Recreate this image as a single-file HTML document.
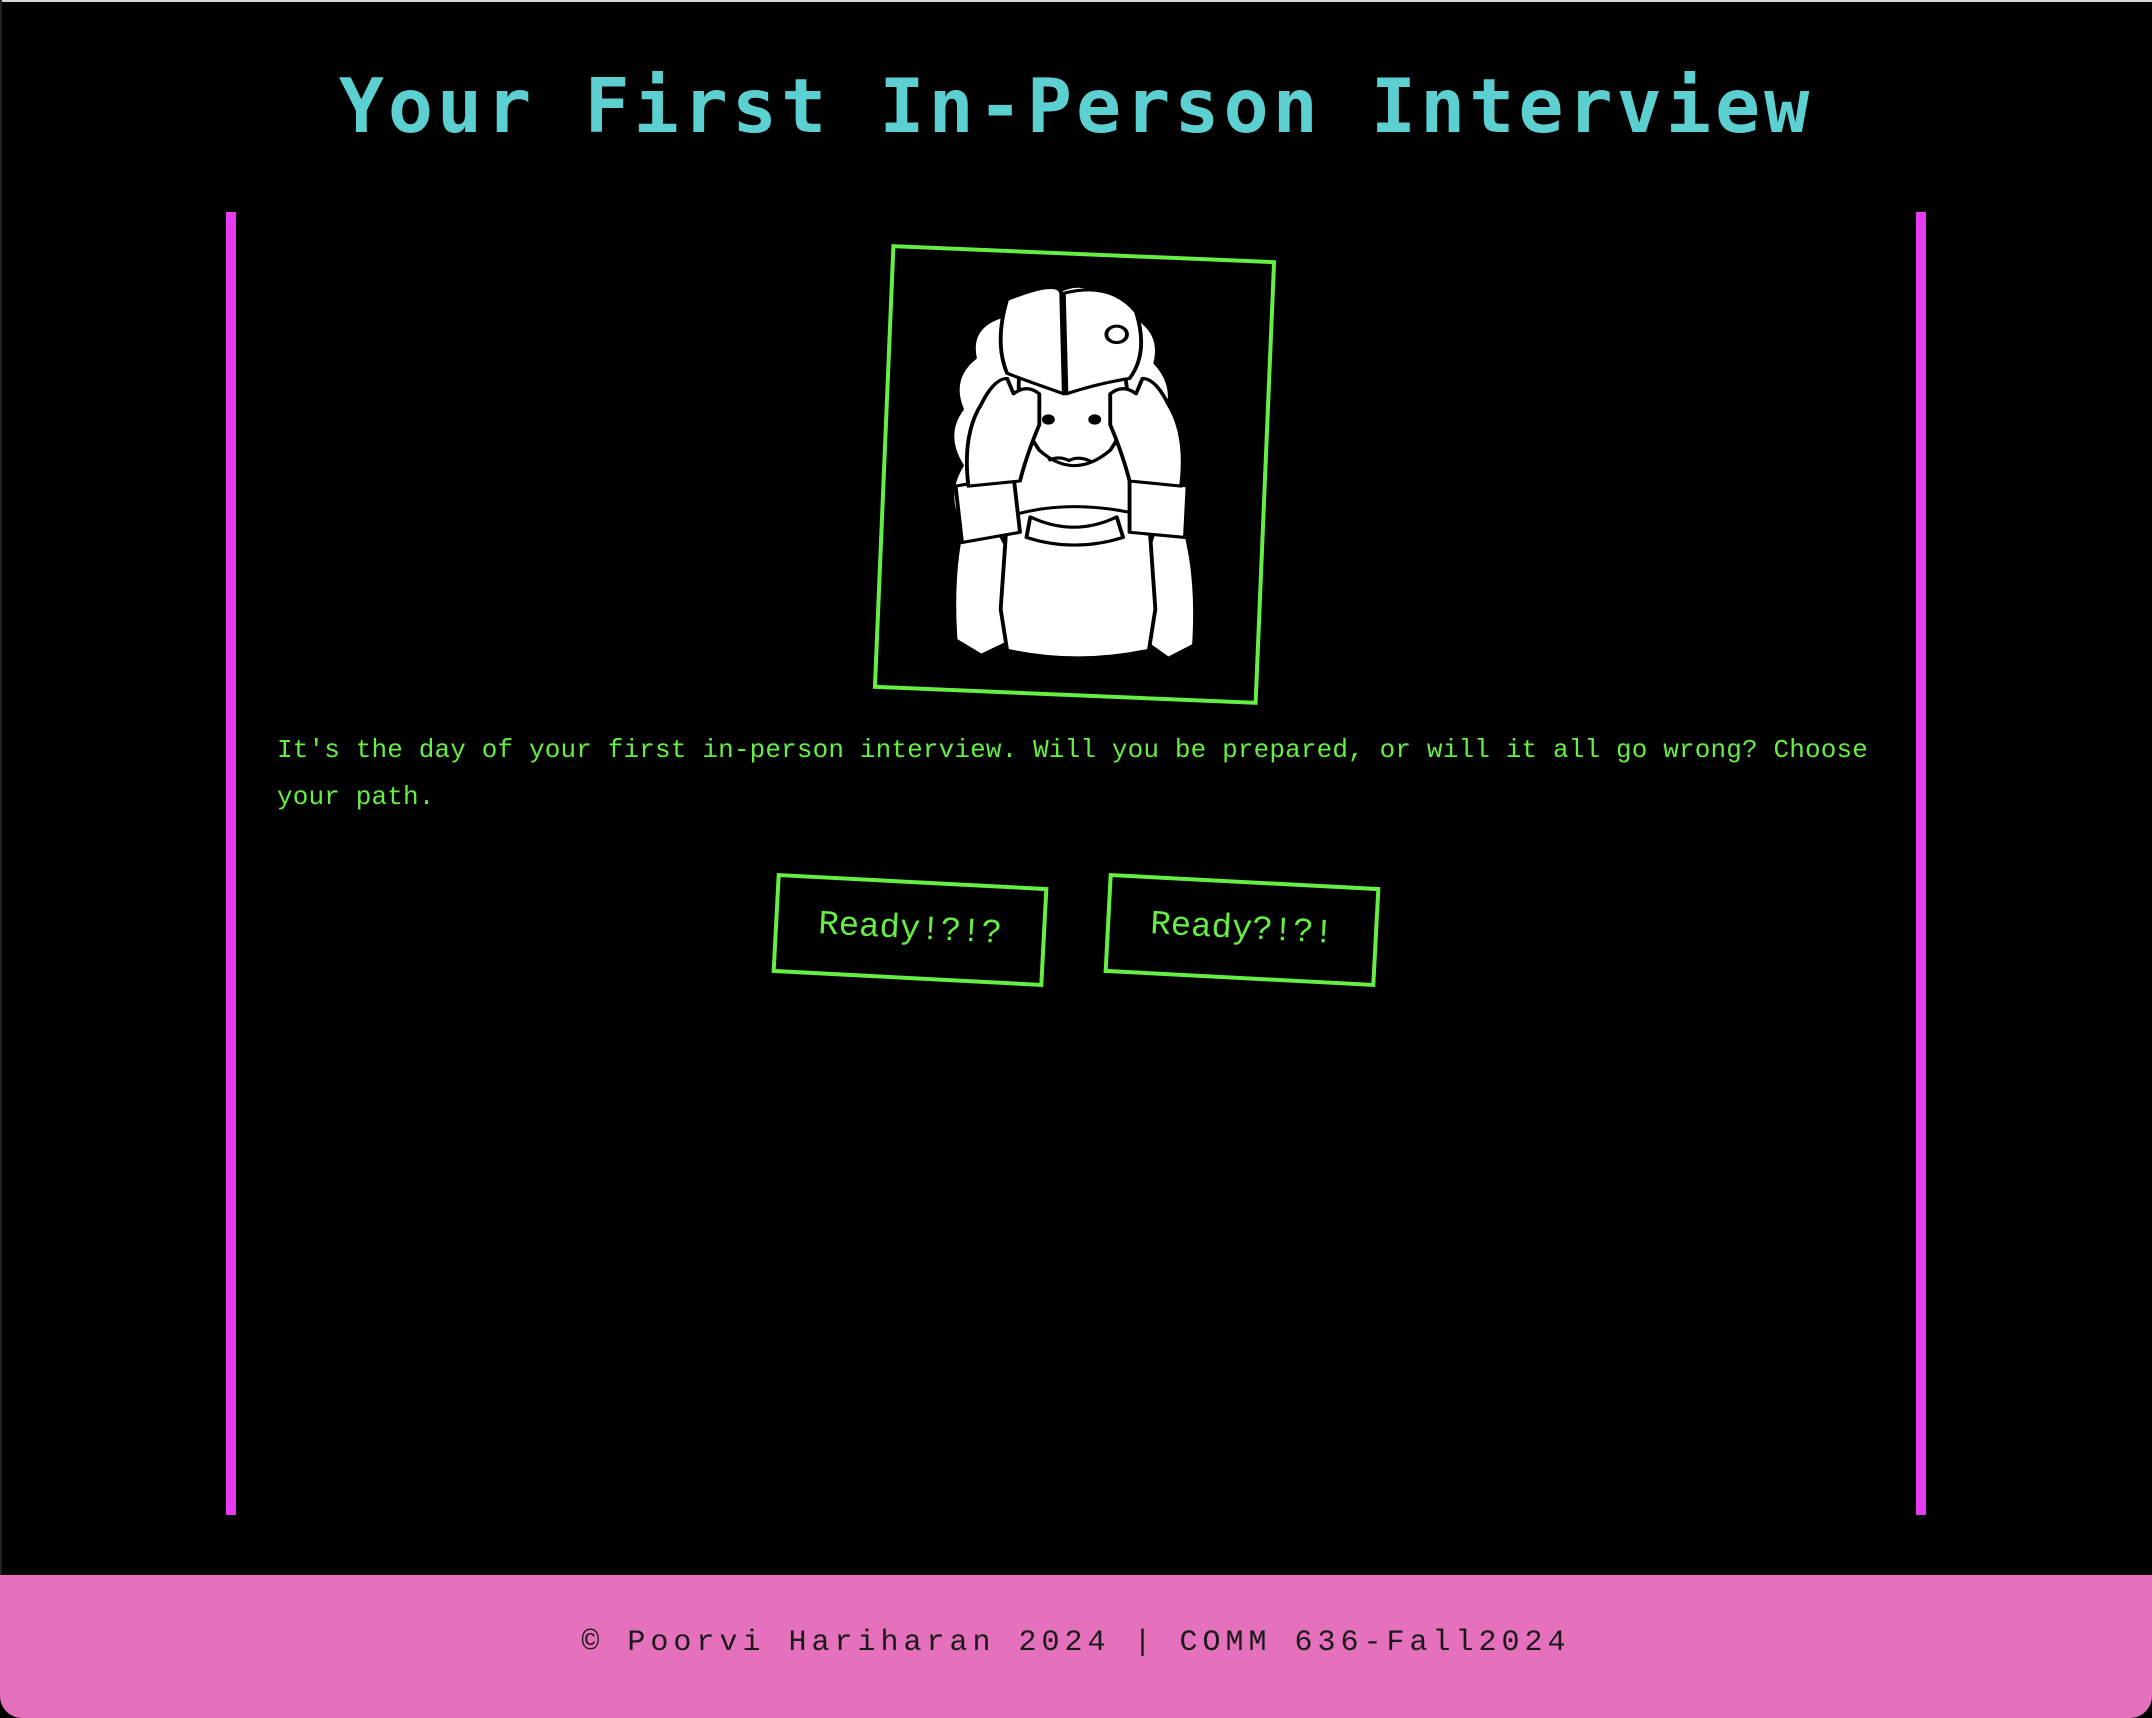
<!DOCTYPE html>
<html><head><meta charset="utf-8"><style>
html,body{margin:0;padding:0;background:#000;}
body{width:2152px;height:1718px;position:relative;overflow:hidden;}
.topline{position:absolute;left:0;top:0;width:2152px;height:2px;background:#d8d8d8;}
.leftline{position:absolute;left:0;top:0;width:2px;height:1575px;background:#222;}
h1{position:absolute;left:0;width:2152px;top:58px;margin:0;text-align:center;font-family:"DejaVu Sans Mono",monospace;font-weight:bold;font-size:75px;letter-spacing:4px;color:#5ccfd1;line-height:96px;}
.bar{position:absolute;top:212px;height:1303px;width:10px;background:#e63cf0;}
.frame{position:absolute;left:882px;top:252px;width:377px;height:437px;border:4px solid #66ee44;transform:rotate(2.4deg);}
p{position:absolute;left:277px;top:727px;width:1640px;margin:0;font-family:"Liberation Mono",monospace;font-size:26px;letter-spacing:0.15px;line-height:47px;color:#66ee44;}
.btn{position:absolute;top:880px;width:264px;height:92px;border:4px solid #66ee44;transform:rotate(3deg);font-family:"Liberation Mono",monospace;font-size:34px;color:#66ee44;text-align:center;line-height:92px;}
footer{position:absolute;left:0;top:1575px;width:2152px;height:143px;background:#e570bb;border-radius:0 0 22px 22px;text-align:center;font-family:"Liberation Mono",monospace;font-size:30px;letter-spacing:5px;color:#1a1a1a;line-height:136px;}
</style></head><body>
<div class="topline"></div><div class="leftline"></div>
<h1>Your First In-Person Interview</h1>
<div class="bar" style="left:226px"></div>
<div class="bar" style="left:1916px"></div>
<div class="frame"></div>
<svg style="position:absolute;left:904px;top:281px" width="348" height="400" viewBox="0 0 270 390" preserveAspectRatio="none">
<g stroke="#000" stroke-width="3" fill="#fff" stroke-linejoin="round">
<path d="M90 12 Q105 0 120 10 Q135 0 150 10 Q175 15 185 40 Q200 55 195 80 Q210 100 205 125 Q220 150 210 175 Q225 210 215 240 Q200 270 150 270 L110 270 Q55 270 45 240 Q30 210 45 180 Q30 150 45 125 Q35 95 55 75 Q50 45 75 35 Q78 18 90 12Z"/>
<path d="M55 200 Q35 260 40 350 L60 365 L85 350 L80 260Z"/>
<path d="M205 200 Q230 260 225 355 L205 368 L185 350 L190 260Z"/>
<path d="M80 230 Q130 210 190 230 L195 320 L190 360 Q135 375 80 360 L75 320Z"/>
<path d="M90 85 Q130 60 170 85 Q180 130 160 165 Q132 195 105 165 Q85 130 90 85Z"/>
<path d="M98 230 Q132 250 165 230 L170 250 Q132 265 95 250Z"/>
<path d="M40 200 L85 190 L90 245 L45 255Z"/>
<path d="M175 190 L220 200 L218 250 L175 245Z"/>
<path d="M50 200 Q45 150 60 120 Q70 95 80 95 L85 110 Q95 100 105 110 L105 140 Q95 170 90 195Z"/>
<path d="M215 200 Q220 150 205 120 Q195 95 185 95 L180 110 Q170 100 160 110 L160 140 Q170 170 175 195Z"/>
<path d="M80 18 Q120 -2 122 12 L124 110 Q90 95 80 90 Q70 60 80 18Z" fill="#fff"/>
<path d="M124 12 Q160 0 180 30 Q190 70 175 95 Q150 100 126 110Z" fill="#fff"/>
<circle cx="165" cy="52" r="8"/>
</g>
<g fill="#000"><circle cx="112" cy="135" r="5"/><circle cx="148" cy="135" r="5"/></g>
<path d="M112 175 Q120 170 128 175 Q136 170 145 176" stroke="#000" stroke-width="3" fill="none"/>
</svg>
<p>It's the day of your first in-person interview. Will you be prepared, or will it all go wrong? Choose your path.</p>
<div class="btn" style="left:774px">Ready!?!?</div>
<div class="btn" style="left:1106px">Ready?!?!</div>
<footer>© Poorvi Hariharan 2024 | COMM 636-Fall2024</footer>
</body></html>
